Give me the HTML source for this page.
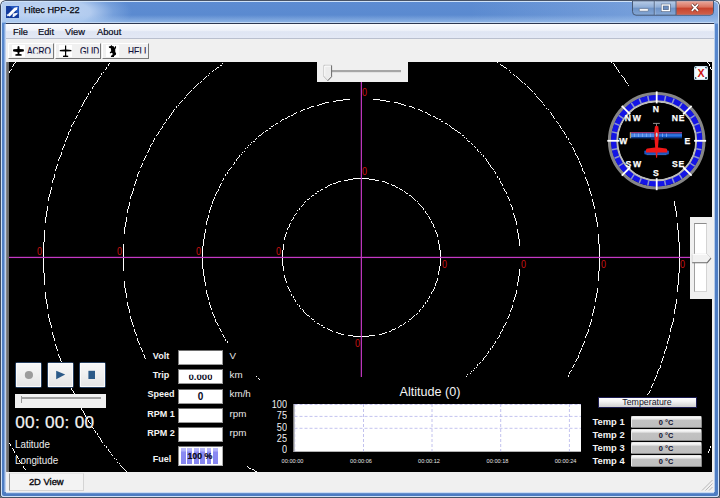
<!DOCTYPE html>
<html><head><meta charset="utf-8"><title>Hitec HPP-22</title>
<style>
html,body{margin:0;padding:0;}
body{width:720px;height:498px;overflow:hidden;background:linear-gradient(180deg,#f4f4f4 0,#f4f4f4 50%,#6a6a6a 50%,#6a6a6a 100%);font-family:"Liberation Sans",sans-serif;position:relative;}
.abs{position:absolute;}
#frame{position:absolute;left:0;top:0;width:720px;height:498px;box-sizing:border-box;border-radius:6px 6px 4px 4px;
 background:linear-gradient(90deg,rgba(255,255,255,0) 0,rgba(255,255,255,0) 470px,rgba(200,222,250,.36) 720px) 0 0/720px 24px no-repeat, linear-gradient(180deg,#5d8cd2 0,#5888ce 30px,#4f7ec4 140px,#4d7cc2 498px);
 box-shadow:inset 0 0 0 .8px #1c2436, inset 0 0 0 2px #cfe2f8;}
#topline{position:absolute;left:6.3px;top:22.9px;width:707.7px;height:1.1px;background:#2e3852;}
#toplite{position:absolute;left:6.3px;top:22.1px;width:707.7px;height:.8px;background:rgba(205,224,248,.8);}
#titleglow{position:absolute;left:2px;top:2px;width:190px;height:20px;background:radial-gradient(ellipse 92px 26px at 38px 10px,rgba(200,219,245,.95),rgba(190,212,243,.88) 55%,rgba(150,185,232,.45) 80%,rgba(120,160,220,0) 100%);}
#titlebot{position:absolute;left:2px;top:15px;width:716px;height:8px;background:linear-gradient(180deg,rgba(160,195,235,0),rgba(165,198,238,.75));}
#title{position:absolute;left:24px;top:5.2px;font-size:9.2px;color:#05050c;white-space:nowrap;-webkit-text-stroke:.25px #05050c;}
#client{position:absolute;left:6.3px;top:24px;width:707.7px;height:467.7px;background:#f0f0f0;box-shadow:-1.5px 0 0 0 rgba(196,214,242,.95), .7px 0 0 0 rgba(235,243,253,.95), 0 1.2px 0 0 rgba(215,230,250,.9);}
#menubar{position:absolute;left:0;top:0;width:707.7px;height:14px;background:linear-gradient(180deg,#fbfcfe 0,#eef1f9 45%,#dfe5f3 55%,#e3e8f5 100%);border-bottom:1px solid #b9bfce;}
.menu{position:absolute;top:2.6px;font-size:9.3px;color:#0a0a20;white-space:nowrap;-webkit-text-stroke:.2px #0a0a20;}
.tb{position:absolute;top:19px;height:16px;box-sizing:border-box;background:#f0f0f0;border-top:1px solid #fff;border-left:1px solid #fff;border-right:1.5px solid #7a7a7a;border-bottom:1.5px solid #7a7a7a;overflow:hidden;}
.tb .ico{position:absolute;left:3.5px;top:0.9px;width:13px;height:12px;background:#fff;}
.tb svg{display:block}
.tb span{position:absolute;top:1.6px;font-size:10.3px;color:#10103a;height:11px;line-height:11px;transform-origin:0 0;transform:scaleX(.805);clip-path:inset(0 0 3.1px 0);white-space:nowrap;-webkit-text-stroke:.2px #10103a;}
#canvas{position:absolute;left:9px;top:62px;width:703px;height:409.8px;background:#000;overflow:hidden;}
#edgeL{position:absolute;left:6.3px;top:62px;width:2.8px;height:409.8px;background:linear-gradient(90deg,#9a9a9a,#6e6e6e 40%,#6a6a6a);}
.w{color:#fff;}
.lab{position:absolute;color:#f4f4f4;font-weight:bold;font-size:9.6px;white-space:nowrap;text-align:center;transform:scaleX(.94);}
.unit{position:absolute;color:#e8e8e8;font-size:9.8px;white-space:nowrap;}
.box{position:absolute;left:178px;width:45px;height:15px;background:#fff;box-sizing:border-box;border:1px solid #9a9a9a;border-top-color:#6e6e6e;border-left-color:#808080;overflow:hidden;text-align:center;font-weight:bold;font-size:9.6px;color:#08081c;}
.tbtn{position:absolute;left:630.5px;width:71px;height:12px;box-sizing:border-box;border:1px solid #e8e8e8;border-right-color:#8a8a8a;border-bottom-color:#8a8a8a;border-radius:1.5px;background:linear-gradient(180deg,#fafafa 0,#e6e6e6 22%,#c2c2c2 30%,#bebebe 100%);text-align:center;font-weight:bold;font-size:7.4px;line-height:11.6px;color:#101030;}
.tlab{position:absolute;left:592.5px;color:#f4f4f4;font-weight:bold;font-size:9.4px;white-space:nowrap;}
.rl{position:absolute;color:#c81212;font-size:11px;line-height:10px;white-space:nowrap;transform-origin:0 0;transform:scaleX(.82);margin-left:-.6px;}
.pbtn{position:absolute;top:361.7px;width:27.8px;height:26.6px;box-sizing:border-box;border:1px solid #274060;border-radius:1.5px;background:linear-gradient(180deg,#f8f8f8 0,#efefef 50%,#e4e4e4 100%);box-shadow:inset 0 0 0 1px #fbfbfb;}
.ylab{position:absolute;color:#f0f0f0;font-size:10.8px;line-height:11px;width:24px;text-align:right;left:262.5px;transform-origin:100% 0;transform:scaleX(.85);white-space:nowrap;}
.xlab{position:absolute;color:#e4e4e4;font-size:5.6px;line-height:7px;top:457.6px;width:30px;text-align:center;white-space:nowrap;}
</style></head>
<body>
<div id="frame"></div>
<div id="titleglow"></div>
<div id="titlebot"></div>
<!-- app icon -->
<svg class="abs" style="left:6px;top:6px" width="13" height="12" viewBox="0 0 14 13">
 <rect x="0" y="0" width="14" height="13" fill="#123a9c"/>
 <path d="M4 0 H14 V9 Z" fill="#2458c0"/>
 <path d="M1 10 L9 2 L12.5 1 L12 3.5 L4 11.5 Z" fill="#fff"/>
 <path d="M7.5 8 L12.5 7.2 L12.5 8.8 L8.5 12 L7 12 Z" fill="#eef2fb"/>
 <path d="M0.5 9.5 L4 8.4 L2 11.5 Z" fill="#dfe8f8"/>
</svg>
<div id="title">Hitec HPP-22</div>
<!-- caption buttons -->
<svg class="abs" style="left:630px;top:0" width="86" height="18" viewBox="0 0 86 18">
 <defs>
  <linearGradient id="gb" x1="0" y1="0" x2="0" y2="1"><stop offset="0" stop-color="#b9cde8"/><stop offset=".45" stop-color="#8fadd6"/><stop offset=".5" stop-color="#6f93c6"/><stop offset="1" stop-color="#85a8d6"/></linearGradient>
  <linearGradient id="gr" x1="0" y1="0" x2="0" y2="1"><stop offset="0" stop-color="#e9a99c"/><stop offset=".45" stop-color="#d9705c"/><stop offset=".5" stop-color="#c6422c"/><stop offset="1" stop-color="#d0604a"/></linearGradient>
 </defs>
 <path d="M2.5 0.8 H83.5 V11.5 Q83.5 15.2 80 15.2 H6 Q2.5 15.2 2.5 11.5 Z" fill="url(#gb)" stroke="#3f4f6a" stroke-width="0.9"/>
 <path d="M46.3 1.2 H83 V11.5 Q83 14.7 80 14.7 H46.3 Z" fill="url(#gr)"/>
 <line x1="24.3" y1="1" x2="24.3" y2="15" stroke="#3f4f6a" stroke-width="0.8"/>
 <line x1="25.1" y1="1" x2="25.1" y2="15" stroke="#c9d9ef" stroke-width="0.6" opacity=".7"/>
 <line x1="46" y1="1" x2="46" y2="15" stroke="#3f4f6a" stroke-width="0.8"/>
 <rect x="9.3" y="8.6" width="9" height="2.6" rx=".6" fill="#fff" stroke="#4d5f7c" stroke-width=".6"/>
 <rect x="32.2" y="5" width="7.2" height="5.6" fill="#6d8fc0" stroke="#4d5f7c" stroke-width="2.5"/>
 <rect x="32.2" y="5" width="7.2" height="5.6" fill="none" stroke="#fff" stroke-width="1.4"/>
 <path d="M61.8 4.4 L68 10.8 M68 4.4 L61.8 10.8" stroke="#5a2a24" stroke-width="3" stroke-linecap="butt"/>
 <path d="M61.8 4.4 L68 10.8 M68 4.4 L61.8 10.8" stroke="#fff" stroke-width="1.8" stroke-linecap="butt"/>
</svg>

<div id="toplite"></div><div id="topline"></div>
<div id="client">
 <div id="menubar"></div>
 <div class="menu" style="left:6.7px">File</div>
 <div class="menu" style="left:31.7px">Edit</div>
 <div class="menu" style="left:58.7px">View</div>
 <div class="menu" style="left:90.7px">About</div>

 <div class="tb" style="left:1.7px;width:46px"><div class="ico"><svg width="13" height="12" viewBox="0 0 13 12"><path d="M5.6 1.6 Q6.5 0.6 7.4 1.6 L7.6 4 L11.6 4.2 Q12.4 5.3 11.6 6.6 L7.6 7 L7.3 9 L9.6 9.3 V10.8 H3.4 V9.3 L5.7 9 L5.4 7 L1.4 6.6 Q0.6 5.3 1.4 4.2 L5.4 4 Z" fill="#000"/></svg></div><span style="left:18.2px">ACRO</span></div>
 <div class="tb" style="left:48.7px;width:46.5px"><div class="ico"><svg width="13" height="12" viewBox="0 0 13 12"><path d="M6 0.5 H7.2 V4.6 L12.4 4.9 V6.2 L7.2 6.5 V10.4 L9.2 10.7 V12 H4 V10.7 L6 10.4 V6.5 L0.8 6.2 V4.9 L6 4.6 Z" fill="#000"/></svg></div><span style="left:24px">GLID</span></div>
 <div class="tb" style="left:95.7px;width:47px"><div class="ico"><svg width="13" height="12" viewBox="0 0 13 12"><path d="M5.5 0 L6.2 1.1 L8 1.5 L8.7 3 L9.2 1.3 Q9.7 0.6 10.1 1.5 L10 3 L9.2 4.2 L9.3 7.2 L10.1 8 L9.9 9.8 L8.7 10.6 L8 11 L8 12 L4.9 12 L5 10.8 L6.4 10 L6.6 8.2 L5.1 7.7 L4.4 8.5 L3.7 8 L4.1 6.9 L5.2 6.3 L4.8 3.3 L3 2.8 L2.8 1.4 L4.6 1.1 Z" fill="#000"/></svg></div><span style="left:24.8px">HELI</span></div>
</div>

<div id="edgeL"></div>
<div id="canvas">
<svg class="abs" style="left:0;top:0" width="703" height="410" viewBox="9 62 703 410">
 <g id="rings" fill="none" stroke-width="1"><path stroke="#fff" d="M15 62.5h1M497 62.5h1M611 62.5h1M707 62.5h1M14 63.5h1M109 63.5h1M222 63.5h1M613 63.5h1M708 63.5h1M13 64.5h1M108 64.5h1M500 64.5h1M614 64.5h1M709 64.5h1M13 65.5h1M108 65.5h1M220 65.5h2M501 65.5h2M614 65.5h1M709 65.5h1M12 66.5h1M503 66.5h1M615 66.5h1M106 67.5h1M217 67.5h2M504 67.5h2M616 67.5h1M710 67.5h1M106 68.5h1M216 68.5h1M506 68.5h1M616 68.5h1M710 68.5h1M11 69.5h1M105 69.5h1M215 69.5h1M617 69.5h1M711 69.5h1M10 70.5h1M213 70.5h1M509 70.5h1M618 70.5h1M9 71.5h1M212 71.5h1M618 71.5h1M9 72.5h1M103 72.5h1M510 72.5h1M619 72.5h1M101 73.5h1M209 73.5h1M101 74.5h1M513 74.5h1M208 75.5h1M514 75.5h1M621 75.5h1M100 76.5h1M206 76.5h1M516 76.5h1M622 76.5h1M99 77.5h1M205 77.5h1M517 77.5h1M623 77.5h1M98 78.5h1M204 78.5h1M518 78.5h1M624 78.5h1M98 79.5h1M203 79.5h1M519 79.5h1M624 79.5h1M97 80.5h1M520 80.5h1M625 80.5h1M97 81.5h1M201 81.5h1M521 81.5h1M625 81.5h1M96 82.5h1M200 82.5h1M522 82.5h1M626 82.5h1M95 83.5h1M198 83.5h1M524 83.5h1M627 83.5h1M94 84.5h1M197 84.5h1M525 84.5h1M196 85.5h1M628 85.5h1M93 86.5h1M195 86.5h1M527 86.5h1M92 87.5h1M194 87.5h1M528 87.5h1M92 88.5h1M193 88.5h1M529 88.5h1M530 89.5h1M191 90.5h1M531 90.5h1M90 91.5h1M190 91.5h1M532 91.5h1M90 92.5h1M189 92.5h1M88 93.5h1M188 93.5h1M534 93.5h1M88 94.5h1M187 94.5h1M535 94.5h1M186 95.5h1M87 96.5h1M536 96.5h1M86 97.5h1M185 97.5h1M537 97.5h1M86 98.5h1M184 98.5h1M538 98.5h1M85 99.5h1M343 99.5h7M373 99.5h7M539 99.5h1M84 100.5h1M182 100.5h1M336 100.5h7M380 100.5h6M540 100.5h1M84 101.5h1M181 101.5h1M333 101.5h3M386 101.5h4M541 101.5h1M83 102.5h1M180 102.5h1M325 102.5h4M394 102.5h4M542 102.5h1M83 103.5h1M179 103.5h1M322 103.5h3M398 103.5h3M82 104.5h1M319 104.5h3M401 104.5h3M543 104.5h1M82 105.5h1M178 105.5h1M317 105.5h2M404 105.5h2M544 105.5h1M81 106.5h1M176 106.5h1M311 106.5h3M409 106.5h3M176 107.5h1M309 107.5h2M412 107.5h2M307 108.5h2M414 108.5h1M546 108.5h1M80 109.5h1M174 109.5h1M303 109.5h2M418 109.5h2M548 109.5h1M79 110.5h1M173 110.5h1M301 110.5h2M420 110.5h2M79 111.5h1M173 111.5h1M300 111.5h1M422 111.5h1M78 112.5h1M172 112.5h1M296 112.5h1M425 112.5h2M550 112.5h1M171 113.5h1M294 113.5h2M427 113.5h1M551 113.5h1M171 114.5h1M293 114.5h1M428 114.5h2M551 114.5h1M77 115.5h1M170 115.5h1M291 115.5h2M430 115.5h1M552 115.5h1M76 116.5h1M169 116.5h1M288 116.5h2M433 116.5h2M553 116.5h1M76 117.5h1M169 117.5h1M287 117.5h1M435 117.5h1M553 117.5h1M75 118.5h1M168 118.5h1M285 118.5h2M436 118.5h2M554 118.5h1M166 119.5h1M282 119.5h2M439 119.5h2M166 120.5h1M281 120.5h1M74 121.5h1M280 121.5h1M441 121.5h2M556 121.5h1M73 122.5h1M165 122.5h1M557 122.5h1M73 123.5h1M164 123.5h1M276 123.5h2M445 123.5h2M558 123.5h1M72 124.5h1M163 124.5h1M275 124.5h1M447 124.5h1M71 125.5h1M273 125.5h1M449 125.5h1M559 125.5h1M71 126.5h1M162 126.5h1M271 126.5h2M450 126.5h1M560 126.5h1M162 127.5h1M451 127.5h1M560 127.5h1M161 128.5h1M269 128.5h2M452 128.5h2M561 128.5h1M70 129.5h1M160 129.5h1M454 129.5h1M70 130.5h1M266 130.5h2M455 130.5h2M562 130.5h1M69 131.5h1M159 131.5h1M265 131.5h1M457 131.5h1M563 131.5h1M68 132.5h1M158 132.5h1M263 132.5h1M458 132.5h2M564 132.5h1M68 133.5h1M158 133.5h1M262 133.5h1M460 133.5h1M564 133.5h1M68 134.5h1M157 134.5h1M261 134.5h1M565 134.5h1M156 135.5h1M259 135.5h2M462 135.5h2M67 136.5h1M258 136.5h1M566 136.5h1M67 137.5h1M464 137.5h1M566 137.5h1M66 138.5h1M154 138.5h1M256 138.5h1M466 138.5h1M568 138.5h1M66 139.5h1M154 139.5h1M255 139.5h1M568 139.5h1M65 140.5h1M153 140.5h1M467 140.5h1M65 141.5h1M153 141.5h1M253 141.5h2M468 141.5h2M251 142.5h1M569 142.5h1M152 143.5h1M471 143.5h1M570 143.5h1M64 144.5h1M151 144.5h1M250 144.5h1M472 144.5h1M571 144.5h1M64 145.5h1M150 145.5h1M248 145.5h1M63 146.5h1M150 146.5h1M474 146.5h1M63 147.5h1M247 147.5h1M475 147.5h1M572 147.5h1M62 148.5h1M149 148.5h1M245 148.5h1M573 148.5h1M62 149.5h1M149 149.5h1M477 149.5h1M573 149.5h1M148 150.5h1M477 150.5h1M574 150.5h1M148 151.5h1M244 151.5h1M478 151.5h1M574 151.5h1M61 152.5h1M147 152.5h1M242 152.5h1M480 152.5h1M61 153.5h1M575 153.5h1M61 154.5h1M241 154.5h1M481 154.5h1M575 154.5h1M60 155.5h1M146 155.5h1M239 155.5h1M483 155.5h1M576 155.5h1M60 156.5h1M145 156.5h1M239 156.5h1M483 156.5h1M577 156.5h1M59 157.5h1M145 157.5h1M238 157.5h1M577 157.5h1M59 158.5h1M144 158.5h1M237 158.5h1M485 158.5h1M578 158.5h1M58 159.5h1M144 159.5h1M236 159.5h1M486 159.5h1M578 159.5h1M58 160.5h1M143 160.5h1M236 160.5h1M486 160.5h1M487 161.5h1M579 161.5h1M234 162.5h1M488 162.5h1M579 162.5h1M142 163.5h1M234 163.5h1M488 163.5h1M580 163.5h1M57 164.5h1M142 164.5h1M233 164.5h1M489 164.5h1M580 164.5h1M57 165.5h1M141 165.5h1M490 165.5h1M581 165.5h1M56 166.5h1M141 166.5h1M490 166.5h1M581 166.5h1M56 167.5h1M140 167.5h1M231 167.5h1M491 167.5h1M56 168.5h1M230 168.5h1M492 168.5h1M582 168.5h1M55 169.5h1M229 169.5h1M493 169.5h1M582 169.5h1M55 170.5h1M228 170.5h1M582 170.5h1M139 171.5h1M494 171.5h1M583 171.5h1M138 172.5h1M227 172.5h1M495 172.5h1M584 172.5h1M138 173.5h1M227 173.5h1M495 173.5h1M584 173.5h1M54 174.5h1M137 174.5h1M225 174.5h1M54 175.5h1M137 175.5h1M225 175.5h1M54 176.5h1M137 176.5h1M497 176.5h1M54 177.5h1M497 177.5h1M585 177.5h1M53 178.5h1M223 178.5h1M353 178.5h16M499 178.5h1M585 178.5h1M53 179.5h1M136 179.5h1M223 179.5h1M348 179.5h5M369 179.5h6M499 179.5h1M586 179.5h1M52 180.5h1M136 180.5h1M222 180.5h1M344 180.5h4M375 180.5h4M586 180.5h1M52 181.5h1M135 181.5h1M338 181.5h3M382 181.5h3M500 181.5h1M587 181.5h1M52 182.5h1M135 182.5h1M336 182.5h2M385 182.5h2M500 182.5h1M587 182.5h1M135 183.5h1M221 183.5h1M333 183.5h3M387 183.5h2M501 183.5h1M587 183.5h1M134 184.5h1M220 184.5h1M330 184.5h2M391 184.5h1M502 184.5h1M588 184.5h1M134 185.5h1M220 185.5h1M328 185.5h2M392 185.5h3M502 185.5h1M588 185.5h1M219 186.5h1M327 186.5h1M395 186.5h1M51 187.5h1M219 187.5h1M325 187.5h2M396 187.5h2M51 188.5h1M133 188.5h1M399 188.5h1M503 188.5h1M589 188.5h1M51 189.5h1M133 189.5h1M218 189.5h1M321 189.5h2M400 189.5h2M504 189.5h1M589 189.5h1M50 190.5h1M133 190.5h1M218 190.5h1M320 190.5h1M402 190.5h1M504 190.5h1M589 190.5h1M50 191.5h1M132 191.5h1M217 191.5h1M317 191.5h2M404 191.5h1M505 191.5h1M590 191.5h1M50 192.5h1M132 192.5h1M216 192.5h1M405 192.5h1M506 192.5h1M590 192.5h1M50 193.5h1M132 193.5h1M216 193.5h1M315 193.5h2M406 193.5h2M506 193.5h1M590 193.5h1M49 194.5h1M131 194.5h1M215 194.5h1M591 194.5h1M49 195.5h1M131 195.5h1M215 195.5h1M312 195.5h2M409 195.5h2M591 195.5h1M49 196.5h1M130 196.5h1M311 196.5h1M411 196.5h1M507 196.5h1M48 197.5h1M130 197.5h1M214 197.5h1M412 197.5h1M508 197.5h1M48 198.5h1M130 198.5h1M214 198.5h1M309 198.5h1M413 198.5h1M508 198.5h1M48 199.5h1M213 199.5h1M307 199.5h2M414 199.5h1M509 199.5h1M592 199.5h1M48 200.5h1M213 200.5h1M415 200.5h1M509 200.5h1M592 200.5h1M212 201.5h1M305 201.5h1M417 201.5h1M592 201.5h1M674 201.5h1M129 202.5h1M212 202.5h1M304 202.5h1M593 202.5h1M674 202.5h1M129 203.5h1M212 203.5h1M418 203.5h1M593 203.5h1M674 203.5h1M129 204.5h1M303 204.5h1M419 204.5h1M510 204.5h1M593 204.5h1M674 204.5h1M129 205.5h1M211 205.5h1M302 205.5h1M420 205.5h1M511 205.5h1M593 205.5h1M674 205.5h1M47 206.5h1M128 206.5h1M211 206.5h1M301 206.5h1M421 206.5h1M511 206.5h1M594 206.5h1M675 206.5h1M47 207.5h1M128 207.5h1M210 207.5h1M422 207.5h1M512 207.5h1M594 207.5h1M675 207.5h1M47 208.5h1M128 208.5h1M210 208.5h1M299 208.5h1M423 208.5h1M512 208.5h1M594 208.5h1M675 208.5h1M47 209.5h1M127 209.5h1M210 209.5h1M299 209.5h1M423 209.5h1M512 209.5h1M675 209.5h1M47 210.5h1M127 210.5h1M209 210.5h1M297 210.5h1M675 210.5h1M46 211.5h1M127 211.5h1M209 211.5h1M425 211.5h1M676 211.5h1M46 212.5h1M127 212.5h1M209 212.5h1M425 212.5h1M676 212.5h1M46 213.5h1M296 213.5h1M426 213.5h1M513 213.5h1M595 213.5h1M676 213.5h1M46 214.5h1M295 214.5h1M427 214.5h1M513 214.5h1M595 214.5h1M676 214.5h1M46 215.5h1M208 215.5h1M294 215.5h1M514 215.5h1M595 215.5h1M676 215.5h1M46 216.5h1M208 216.5h1M428 216.5h1M514 216.5h1M595 216.5h1M676 216.5h1M45 217.5h1M126 217.5h1M208 217.5h1M293 217.5h1M429 217.5h1M514 217.5h1M596 217.5h1M45 218.5h1M126 218.5h1M207 218.5h1M293 218.5h1M429 218.5h1M515 218.5h1M596 218.5h1M45 219.5h1M126 219.5h1M207 219.5h1M292 219.5h1M430 219.5h1M515 219.5h1M596 219.5h1M45 220.5h1M126 220.5h1M207 220.5h1M291 220.5h1M515 220.5h1M596 220.5h1M45 221.5h1M126 221.5h1M206 221.5h1M431 221.5h1M516 221.5h1M596 221.5h1M45 222.5h1M125 222.5h1M206 222.5h1M431 222.5h1M516 222.5h1M597 222.5h1M125 223.5h1M206 223.5h1M290 223.5h1M432 223.5h1M516 223.5h1M597 223.5h1M677 223.5h1M125 224.5h1M206 224.5h1M289 224.5h1M433 224.5h1M516 224.5h1M597 224.5h1M677 224.5h1M125 225.5h1M289 225.5h1M433 225.5h1M597 225.5h1M677 225.5h1M125 226.5h1M289 226.5h1M433 226.5h1M597 226.5h1M677 226.5h1M124 227.5h1M288 227.5h1M434 227.5h1M677 227.5h1M124 228.5h1M287 228.5h1M677 228.5h1M124 229.5h1M205 229.5h1M287 229.5h1M517 229.5h1M677 229.5h1M44 230.5h1M124 230.5h1M205 230.5h1M435 230.5h1M517 230.5h1M678 230.5h1M44 231.5h1M124 231.5h1M205 231.5h1M435 231.5h1M517 231.5h1M678 231.5h1M44 232.5h1M124 232.5h1M205 232.5h1M286 232.5h1M436 232.5h1M517 232.5h1M678 232.5h1M44 233.5h1M124 233.5h1M204 233.5h1M286 233.5h1M436 233.5h1M518 233.5h1M678 233.5h1M44 234.5h1M204 234.5h1M285 234.5h1M437 234.5h1M518 234.5h1M598 234.5h1M678 234.5h1M44 235.5h1M204 235.5h1M285 235.5h1M437 235.5h1M518 235.5h1M598 235.5h1M678 235.5h1M44 236.5h1M204 236.5h1M285 236.5h1M437 236.5h1M518 236.5h1M598 236.5h1M678 236.5h1M44 237.5h1M204 237.5h1M284 237.5h1M518 237.5h1M598 237.5h1M678 237.5h1M44 238.5h1M204 238.5h1M284 238.5h1M518 238.5h1M598 238.5h1M678 238.5h1M44 239.5h1M203 239.5h1M284 239.5h1M519 239.5h1M598 239.5h1M678 239.5h1M44 240.5h1M203 240.5h1M438 240.5h1M519 240.5h1M598 240.5h1M678 240.5h1M44 241.5h1M203 241.5h1M438 241.5h1M519 241.5h1M598 241.5h1M678 241.5h1M43 242.5h1M203 242.5h1M438 242.5h1M519 242.5h1M598 242.5h1M679 242.5h1M43 243.5h1M203 243.5h1M438 243.5h1M519 243.5h1M598 243.5h1M679 243.5h1M43 244.5h1M123 244.5h1M203 244.5h1M283 244.5h1M439 244.5h1M519 244.5h1M599 244.5h1M679 244.5h1M43 245.5h1M123 245.5h1M203 245.5h1M283 245.5h1M439 245.5h1M519 245.5h1M599 245.5h1M679 245.5h1M43 246.5h1M123 246.5h1M202 246.5h1M283 246.5h1M439 246.5h1M599 246.5h1M679 246.5h1M43 247.5h1M123 247.5h1M202 247.5h1M283 247.5h1M439 247.5h1M599 247.5h1M679 247.5h1M43 248.5h1M123 248.5h1M202 248.5h1M283 248.5h1M439 248.5h1M599 248.5h1M679 248.5h1M43 249.5h1M123 249.5h1M202 249.5h1M283 249.5h1M439 249.5h1M599 249.5h1M679 249.5h1M43 250.5h1M123 250.5h1M202 250.5h1M282 250.5h1M440 250.5h1M599 250.5h1M679 250.5h1M43 251.5h1M123 251.5h1M202 251.5h1M282 251.5h1M440 251.5h1M599 251.5h1M679 251.5h1M43 252.5h1M123 252.5h1M202 252.5h1M282 252.5h1M440 252.5h1M599 252.5h1M679 252.5h1M43 253.5h1M123 253.5h1M202 253.5h1M282 253.5h1M440 253.5h1M599 253.5h1M679 253.5h1M43 254.5h1M123 254.5h1M202 254.5h1M282 254.5h1M440 254.5h1M599 254.5h1M679 254.5h1M43 255.5h1M123 255.5h1M202 255.5h1M282 255.5h1M440 255.5h1M599 255.5h1M679 255.5h1M43 256.5h1M123 256.5h1M202 256.5h1M282 256.5h1M440 256.5h1M599 256.5h1M679 256.5h1M43 257.5h1M123 257.5h1M202 257.5h1M282 257.5h1M440 257.5h1M599 257.5h1M679 257.5h1M43 258.5h1M123 258.5h1M202 258.5h1M282 258.5h1M440 258.5h1M599 258.5h1M679 258.5h1M43 259.5h1M123 259.5h1M202 259.5h1M282 259.5h1M440 259.5h1M599 259.5h1M679 259.5h1M43 260.5h1M123 260.5h1M202 260.5h1M282 260.5h1M440 260.5h1M599 260.5h1M679 260.5h1M43 261.5h1M123 261.5h1M202 261.5h1M282 261.5h1M440 261.5h1M599 261.5h1M679 261.5h1M43 262.5h1M123 262.5h1M202 262.5h1M282 262.5h1M440 262.5h1M599 262.5h1M679 262.5h1M43 263.5h1M123 263.5h1M202 263.5h1M282 263.5h1M440 263.5h1M599 263.5h1M679 263.5h1M43 264.5h1M123 264.5h1M202 264.5h1M282 264.5h1M440 264.5h1M599 264.5h1M679 264.5h1M43 265.5h1M123 265.5h1M202 265.5h1M282 265.5h1M440 265.5h1M599 265.5h1M679 265.5h1M43 266.5h1M123 266.5h1M202 266.5h1M283 266.5h1M439 266.5h1M599 266.5h1M679 266.5h1M43 267.5h1M123 267.5h1M202 267.5h1M283 267.5h1M439 267.5h1M599 267.5h1M679 267.5h1M43 268.5h1M123 268.5h1M202 268.5h1M283 268.5h1M439 268.5h1M599 268.5h1M679 268.5h1M43 269.5h1M123 269.5h1M203 269.5h1M283 269.5h1M439 269.5h1M519 269.5h1M599 269.5h1M679 269.5h1M43 270.5h1M123 270.5h1M203 270.5h1M283 270.5h1M439 270.5h1M519 270.5h1M599 270.5h1M679 270.5h1M43 271.5h1M203 271.5h1M438 271.5h1M519 271.5h1M598 271.5h1M679 271.5h1M43 272.5h1M203 272.5h1M438 272.5h1M519 272.5h1M598 272.5h1M679 272.5h1M44 273.5h1M203 273.5h1M438 273.5h1M519 273.5h1M598 273.5h1M678 273.5h1M44 274.5h1M203 274.5h1M438 274.5h1M519 274.5h1M598 274.5h1M678 274.5h1M44 275.5h1M203 275.5h1M284 275.5h1M519 275.5h1M598 275.5h1M678 275.5h1M44 276.5h1M204 276.5h1M284 276.5h1M518 276.5h1M598 276.5h1M678 276.5h1M44 277.5h1M204 277.5h1M284 277.5h1M518 277.5h1M598 277.5h1M678 277.5h1M44 278.5h1M204 278.5h1M285 278.5h1M437 278.5h1M518 278.5h1M598 278.5h1M678 278.5h1M44 279.5h1M204 279.5h1M285 279.5h1M437 279.5h1M518 279.5h1M598 279.5h1M678 279.5h1M44 280.5h1M204 280.5h1M285 280.5h1M437 280.5h1M518 280.5h1M598 280.5h1M678 280.5h1M44 281.5h1M124 281.5h1M204 281.5h1M286 281.5h1M436 281.5h1M518 281.5h1M678 281.5h1M44 282.5h1M124 282.5h1M205 282.5h1M286 282.5h1M436 282.5h1M517 282.5h1M678 282.5h1M44 283.5h1M124 283.5h1M205 283.5h1M435 283.5h1M517 283.5h1M678 283.5h1M44 284.5h1M124 284.5h1M205 284.5h1M435 284.5h1M517 284.5h1M678 284.5h1M124 285.5h1M205 285.5h1M435 285.5h1M517 285.5h1M677 285.5h1M124 286.5h1M287 286.5h1M677 286.5h1M124 287.5h1M288 287.5h1M434 287.5h1M677 287.5h1M125 288.5h1M288 288.5h1M434 288.5h1M597 288.5h1M677 288.5h1M125 289.5h1M289 289.5h1M433 289.5h1M597 289.5h1M677 289.5h1M125 290.5h1M206 290.5h1M289 290.5h1M433 290.5h1M516 290.5h1M597 290.5h1M677 290.5h1M125 291.5h1M206 291.5h1M290 291.5h1M432 291.5h1M516 291.5h1M597 291.5h1M677 291.5h1M45 292.5h1M125 292.5h1M206 292.5h1M431 292.5h1M516 292.5h1M597 292.5h1M45 293.5h1M126 293.5h1M206 293.5h1M431 293.5h1M516 293.5h1M596 293.5h1M45 294.5h1M126 294.5h1M207 294.5h1M291 294.5h1M515 294.5h1M596 294.5h1M45 295.5h1M126 295.5h1M207 295.5h1M291 295.5h1M515 295.5h1M596 295.5h1M45 296.5h1M126 296.5h1M207 296.5h1M293 296.5h1M429 296.5h1M515 296.5h1M596 296.5h1M45 297.5h1M126 297.5h1M208 297.5h1M293 297.5h1M429 297.5h1M514 297.5h1M596 297.5h1M45 298.5h1M208 298.5h1M428 298.5h1M514 298.5h1M595 298.5h1M46 299.5h1M208 299.5h1M294 299.5h1M514 299.5h1M595 299.5h1M676 299.5h1M46 300.5h1M295 300.5h1M427 300.5h1M513 300.5h1M595 300.5h1M676 300.5h1M46 301.5h1M295 301.5h1M427 301.5h1M513 301.5h1M595 301.5h1M676 301.5h1M46 302.5h1M127 302.5h1M209 302.5h1M425 302.5h1M676 302.5h1M46 303.5h1M127 303.5h1M209 303.5h1M425 303.5h1M676 303.5h1M47 304.5h1M127 304.5h1M209 304.5h1M297 304.5h1M675 304.5h1M47 305.5h1M127 305.5h1M210 305.5h1M299 305.5h1M423 305.5h1M512 305.5h1M675 305.5h1M47 306.5h1M128 306.5h1M210 306.5h1M299 306.5h1M423 306.5h1M512 306.5h1M594 306.5h1M675 306.5h1M47 307.5h1M128 307.5h1M210 307.5h1M422 307.5h1M512 307.5h1M594 307.5h1M675 307.5h1M47 308.5h1M128 308.5h1M211 308.5h1M300 308.5h1M511 308.5h1M594 308.5h1M675 308.5h1M129 309.5h1M211 309.5h1M302 309.5h1M420 309.5h1M511 309.5h1M593 309.5h1M674 309.5h1M129 310.5h1M303 310.5h1M419 310.5h1M510 310.5h1M593 310.5h1M674 310.5h1M129 311.5h1M303 311.5h1M419 311.5h1M510 311.5h1M593 311.5h1M674 311.5h1M129 312.5h1M212 312.5h1M304 312.5h1M593 312.5h1M674 312.5h1M212 313.5h1M305 313.5h1M417 313.5h1M592 313.5h1M674 313.5h1M48 314.5h1M213 314.5h1M306 314.5h1M416 314.5h1M509 314.5h1M592 314.5h1M48 315.5h1M213 315.5h1M307 315.5h2M414 315.5h1M509 315.5h1M592 315.5h1M48 316.5h1M130 316.5h1M214 316.5h1M309 316.5h1M413 316.5h1M508 316.5h1M48 317.5h1M130 317.5h1M214 317.5h1M412 317.5h1M508 317.5h1M49 318.5h1M130 318.5h1M311 318.5h1M411 318.5h1M507 318.5h1M673 318.5h1M49 319.5h1M131 319.5h1M215 319.5h1M312 319.5h2M409 319.5h2M591 319.5h1M673 319.5h1M49 320.5h1M131 320.5h1M215 320.5h1M591 320.5h1M673 320.5h1M49 321.5h1M131 321.5h1M215 321.5h1M314 321.5h1M408 321.5h1M591 321.5h1M673 321.5h1M50 322.5h1M132 322.5h1M216 322.5h1M405 322.5h1M506 322.5h1M590 322.5h1M672 322.5h1M50 323.5h1M132 323.5h1M217 323.5h1M317 323.5h2M404 323.5h1M505 323.5h1M590 323.5h1M672 323.5h1M50 324.5h1M132 324.5h1M217 324.5h1M319 324.5h1M403 324.5h1M505 324.5h1M590 324.5h1M672 324.5h1M51 325.5h1M133 325.5h1M218 325.5h1M321 325.5h2M400 325.5h2M504 325.5h1M589 325.5h1M671 325.5h1M51 326.5h1M133 326.5h1M399 326.5h1M503 326.5h1M589 326.5h1M671 326.5h1M51 327.5h1M323 327.5h2M398 327.5h1M503 327.5h1M671 327.5h1M219 328.5h1M327 328.5h1M395 328.5h1M670 328.5h1M134 329.5h1M220 329.5h1M328 329.5h2M392 329.5h3M502 329.5h1M588 329.5h1M670 329.5h1M134 330.5h1M220 330.5h1M330 330.5h2M391 330.5h1M502 330.5h1M588 330.5h1M670 330.5h1M134 331.5h1M221 331.5h1M332 331.5h1M389 331.5h2M501 331.5h1M588 331.5h1M670 331.5h1M52 332.5h1M135 332.5h1M336 332.5h2M385 332.5h2M500 332.5h1M587 332.5h1M52 333.5h1M135 333.5h1M338 333.5h3M382 333.5h3M500 333.5h1M587 333.5h1M52 334.5h1M136 334.5h1M222 334.5h1M341 334.5h3M379 334.5h3M586 334.5h1M53 335.5h1M136 335.5h1M223 335.5h1M348 335.5h5M369 335.5h6M499 335.5h1M586 335.5h1M669 335.5h1M53 336.5h1M223 336.5h1M353 336.5h16M499 336.5h1M585 336.5h1M669 336.5h1M53 337.5h1M224 337.5h1M498 337.5h1M585 337.5h1M669 337.5h1M54 338.5h1M137 338.5h1M497 338.5h1M668 338.5h1M54 339.5h1M137 339.5h1M225 339.5h1M668 339.5h1M54 340.5h1M137 340.5h1M225 340.5h1M668 340.5h1M138 341.5h1M227 341.5h1M495 341.5h1M584 341.5h1M667 341.5h1M138 342.5h1M227 342.5h1M495 342.5h1M584 342.5h1M667 342.5h1M139 343.5h1M494 343.5h1M583 343.5h1M667 343.5h1M55 344.5h1M139 344.5h1M583 344.5h1M55 345.5h1M493 345.5h1M582 345.5h1M56 346.5h1M492 346.5h1M582 346.5h1M666 346.5h1M56 347.5h1M140 347.5h1M492 347.5h1M666 347.5h1M56 348.5h1M141 348.5h1M490 348.5h1M581 348.5h1M666 348.5h1M57 349.5h1M141 349.5h1M490 349.5h1M581 349.5h1M665 349.5h1M57 350.5h1M142 350.5h1M580 350.5h1M665 350.5h1M142 351.5h1M488 351.5h1M580 351.5h1M664 351.5h1M488 352.5h1M579 352.5h1M664 352.5h1M487 353.5h1M579 353.5h1M664 353.5h1M58 354.5h1M143 354.5h1M58 355.5h1M144 355.5h1M486 355.5h1M578 355.5h1M59 356.5h1M144 356.5h1M485 356.5h1M578 356.5h1M663 356.5h1M59 357.5h1M144 357.5h1M484 357.5h1M578 357.5h1M663 357.5h1M60 358.5h1M145 358.5h1M483 358.5h1M577 358.5h1M662 358.5h1M60 359.5h1M483 359.5h1M576 359.5h1M662 359.5h1M60 360.5h1M482 360.5h1M576 360.5h1M662 360.5h1M61 361.5h1M575 361.5h1M661 361.5h1M61 362.5h1M480 362.5h1M661 362.5h1M479 363.5h1M477 364.5h1M574 364.5h1M62 365.5h1M477 365.5h1M573 365.5h1M660 365.5h1M62 366.5h1M573 366.5h1M660 366.5h1M62 367.5h1M476 367.5h1M572 367.5h1M660 367.5h1M63 368.5h1M474 368.5h1M659 368.5h1M64 369.5h1M658 369.5h1M64 370.5h1M473 370.5h1M571 370.5h1M658 370.5h1M471 371.5h1M570 371.5h1M657 371.5h1M569 372.5h1M657 372.5h1M470 373.5h1M569 373.5h1M657 373.5h1M65 374.5h1M467 374.5h1M66 375.5h1M568 375.5h1M656 375.5h1M66 376.5h1M256 376.5h1M466 376.5h1M568 376.5h1M656 376.5h1M67 377.5h1M655 377.5h1M67 378.5h1M258 378.5h1M655 378.5h1M259 379.5h1M654 379.5h1M654 380.5h1M68 381.5h1M68 382.5h1M69 383.5h1M653 383.5h1M70 384.5h1M652 384.5h1M70 385.5h1M652 385.5h1M651 386.5h1M651 387.5h1M71 388.5h1M71 389.5h1M72 390.5h1M650 390.5h1M73 391.5h1M649 391.5h1M73 392.5h1M649 392.5h1M74 393.5h1M648 393.5h1M647 394.5h1M75 396.5h1M76 397.5h1M76 398.5h1M77 399.5h1M78 402.5h1M78 403.5h1M79 404.5h1M80 405.5h1M80 406.5h1M81 408.5h1M81 409.5h1M82 410.5h1M83 411.5h1M83 412.5h1M84 413.5h1M84 414.5h1M85 415.5h1M85 416.5h1M86 417.5h1M87 418.5h1M88 420.5h1M88 421.5h1M89 422.5h1M90 423.5h1M91 426.5h1M92 427.5h1M93 428.5h1M94 430.5h1M95 431.5h1M95 432.5h1M97 433.5h1M97 434.5h1M98 436.5h1M99 437.5h1M100 438.5h1M100 439.5h1M101 440.5h1M101 441.5h1M102 442.5h1M9 443.5h1M10 444.5h1M10 445.5h1M104 445.5h1M106 446.5h1M710 446.5h1M106 447.5h1M710 447.5h1M12 448.5h1M13 449.5h1M108 449.5h1M709 449.5h1M13 450.5h1M108 450.5h1M709 450.5h1M14 451.5h1M109 451.5h1M708 451.5h1M14 452.5h1M110 452.5h1M708 452.5h1M111 454.5h1M16 455.5h1M112 455.5h1M17 456.5h1M17 457.5h1M18 458.5h1M114 458.5h1M116 459.5h1M19 460.5h1M19 461.5h1M20 462.5h1M117 462.5h1M21 463.5h1M119 463.5h1M120 465.5h1M23 466.5h1M121 466.5h1M247 466.5h1M23 467.5h1M122 467.5h1M248 467.5h1M24 468.5h1M123 468.5h1M249 468.5h2M25 469.5h1M124 469.5h1M252 469.5h2M125 470.5h1M254 470.5h1M126 471.5h1M255 471.5h2"/></g>
 <rect x="8.5" y="256.8" width="682" height="1.25" fill="#c438c4"/>
 <rect x="360.75" y="82" width="1.2" height="295" fill="#c438c4"/>
</svg>
</div>

<div id="ov" class="abs" style="left:0;top:0;width:720px;height:498px;overflow:hidden">
<!-- black panels hiding rings -->
<div class="abs" style="left:146px;top:343px;width:109.5px;height:123px;background:#000"></div>
<div class="abs" style="left:260px;top:377px;width:328px;height:95px;background:#000"></div>
<div class="abs" style="left:588px;top:395px;width:119.5px;height:77px;background:#000"></div>
<div class="abs" style="left:600px;top:85.5px;width:112px;height:115.5px;background:#000"></div>
<!-- red ring labels -->
<div class="rl" style="left:362.3px;top:166px">0</div>
<div class="rl" style="left:362.3px;top:86.5px">0</div>
<div class="rl" style="left:356px;top:338px">0</div>
<div class="rl" style="left:277px;top:246px">0</div>
<div class="rl" style="left:197px;top:246px">0</div>
<div class="rl" style="left:117.5px;top:246px">0</div>
<div class="rl" style="left:38px;top:246px">0</div>
<div class="rl" style="left:442.3px;top:258.5px">0</div>
<div class="rl" style="left:521.8px;top:258.5px">0</div>
<div class="rl" style="left:601.3px;top:258.5px">0</div>
<div class="rl" style="left:680.8px;top:258.5px">0</div>

<!-- top slider -->
<div class="abs" style="left:317px;top:61.5px;width:90.5px;height:20.2px;background:#f0f0f0"></div>
<div class="abs" style="left:331px;top:70.4px;width:69.5px;height:1.9px;background:#a6a6a6;border-bottom:.6px solid #e2e2e2"></div>
<svg class="abs" style="left:322px;top:64px" width="12" height="19" viewBox="0 0 12 19"><path d="M1.9 1.3 H9.5 V12.6 L5.7 16.6 L1.9 12.6 Z" fill="#ececec" stroke="#b4b4b4" stroke-width=".8"/><path d="M9.6 1.5 V12.7 L5.7 16.8" fill="none" stroke="#6e6e6e" stroke-width="1"/><path d="M2.7 12 V2.1 H8.8" fill="none" stroke="#fff" stroke-width=".9"/></svg>

<!-- X button -->
<div class="abs" style="left:694.4px;top:66.4px;width:13.4px;height:13.4px;background:radial-gradient(circle at 1.2px 1.2px,#3f5f70 0,#3f5f70 .9px,rgba(63,95,112,0) 1.6px),radial-gradient(circle at 12.2px 1.2px,#3f5f70 0,#3f5f70 .9px,rgba(63,95,112,0) 1.6px),radial-gradient(circle at 1.2px 12.2px,#3f5f70 0,#3f5f70 .9px,rgba(63,95,112,0) 1.6px),radial-gradient(circle at 12.2px 12.2px,#3f5f70 0,#3f5f70 .9px,rgba(63,95,112,0) 1.6px),#f4fbff;box-sizing:border-box;border-radius:1.5px;box-shadow:inset 0 0 0 1px #cde2ee;color:#cc1212;font-weight:bold;font-size:10.6px;line-height:14.4px;text-align:center">X</div>

<!-- right vertical slider -->
<div class="abs" style="left:690px;top:216.6px;width:22px;height:82px;background:#f0f0f0"></div>
<div class="abs" style="left:694px;top:222.6px;width:13.2px;height:69.2px;box-sizing:border-box;background:#fff;border:1px solid #d4d4d4;border-top:1.2px solid #8c8c8c;border-left:1.2px solid #a0a0a0"></div>
<svg class="abs" style="left:690px;top:252px" width="23" height="13" viewBox="0 0 23 13"><path d="M2.2 2.2 H17.2 L21 6 L17.2 10.6 H2.2 Z" fill="#f1f1f1" stroke="#c8c8c8" stroke-width=".6"/><path d="M2.2 10.7 H17.3 L21 6.2" fill="none" stroke="#707070" stroke-width="1.1"/><path d="M2.4 2.4 H17" fill="none" stroke="#fff" stroke-width="1"/></svg>
<svg class="abs" style="left:600px;top:84px" width="114" height="114" viewBox="600 84 114 114">
<circle cx="656.7" cy="140.8" r="47.1" fill="none" stroke="#868686" stroke-width="3.4"/>
<circle cx="656.7" cy="140.8" r="43" fill="none" stroke="#1414e6" stroke-width="5.4"/>
<circle cx="656.7" cy="140.8" r="39.4" fill="none" stroke="#bcbcbc" stroke-width="2.1"/>
<circle cx="656.7" cy="140.8" r="38.4" fill="#000"/>
<line x1="664.58" y1="101.18" x2="665.62" y2="95.98" stroke="#8c94cc" stroke-width="1.5"/>
<line x1="672.16" y1="103.48" x2="674.19" y2="98.58" stroke="#8c94cc" stroke-width="1.5"/>
<line x1="679.15" y1="107.21" x2="682.09" y2="102.80" stroke="#8c94cc" stroke-width="1.5"/>
<line x1="690.29" y1="118.35" x2="694.70" y2="115.41" stroke="#8c94cc" stroke-width="1.5"/>
<line x1="694.02" y1="125.34" x2="698.92" y2="123.31" stroke="#8c94cc" stroke-width="1.5"/>
<line x1="696.32" y1="132.92" x2="701.52" y2="131.88" stroke="#8c94cc" stroke-width="1.5"/>
<line x1="696.32" y1="148.68" x2="701.52" y2="149.72" stroke="#8c94cc" stroke-width="1.5"/>
<line x1="694.02" y1="156.26" x2="698.92" y2="158.29" stroke="#8c94cc" stroke-width="1.5"/>
<line x1="690.29" y1="163.25" x2="694.70" y2="166.19" stroke="#8c94cc" stroke-width="1.5"/>
<line x1="679.15" y1="174.39" x2="682.09" y2="178.80" stroke="#8c94cc" stroke-width="1.5"/>
<line x1="672.16" y1="178.12" x2="674.19" y2="183.02" stroke="#8c94cc" stroke-width="1.5"/>
<line x1="664.58" y1="180.42" x2="665.62" y2="185.62" stroke="#8c94cc" stroke-width="1.5"/>
<line x1="648.82" y1="180.42" x2="647.78" y2="185.62" stroke="#8c94cc" stroke-width="1.5"/>
<line x1="641.24" y1="178.12" x2="639.21" y2="183.02" stroke="#8c94cc" stroke-width="1.5"/>
<line x1="634.25" y1="174.39" x2="631.31" y2="178.80" stroke="#8c94cc" stroke-width="1.5"/>
<line x1="623.11" y1="163.25" x2="618.70" y2="166.19" stroke="#8c94cc" stroke-width="1.5"/>
<line x1="619.38" y1="156.26" x2="614.48" y2="158.29" stroke="#8c94cc" stroke-width="1.5"/>
<line x1="617.08" y1="148.68" x2="611.88" y2="149.72" stroke="#8c94cc" stroke-width="1.5"/>
<line x1="617.08" y1="132.92" x2="611.88" y2="131.88" stroke="#8c94cc" stroke-width="1.5"/>
<line x1="619.38" y1="125.34" x2="614.48" y2="123.31" stroke="#8c94cc" stroke-width="1.5"/>
<line x1="623.11" y1="118.35" x2="618.70" y2="115.41" stroke="#8c94cc" stroke-width="1.5"/>
<line x1="634.25" y1="107.21" x2="631.31" y2="102.80" stroke="#8c94cc" stroke-width="1.5"/>
<line x1="641.24" y1="103.48" x2="639.21" y2="98.58" stroke="#8c94cc" stroke-width="1.5"/>
<line x1="648.82" y1="101.18" x2="647.78" y2="95.98" stroke="#8c94cc" stroke-width="1.5"/>
<line x1="656.70" y1="103.40" x2="656.70" y2="91.40" stroke="#fff" stroke-width="1.8"/>
<line x1="683.15" y1="114.35" x2="691.63" y2="105.87" stroke="#fff" stroke-width="1.8"/>
<line x1="694.10" y1="140.80" x2="706.10" y2="140.80" stroke="#fff" stroke-width="1.8"/>
<line x1="683.15" y1="167.25" x2="691.63" y2="175.73" stroke="#fff" stroke-width="1.8"/>
<line x1="656.70" y1="178.20" x2="656.70" y2="190.20" stroke="#fff" stroke-width="1.8"/>
<line x1="630.25" y1="167.25" x2="621.77" y2="175.73" stroke="#fff" stroke-width="1.8"/>
<line x1="619.30" y1="140.80" x2="607.30" y2="140.80" stroke="#fff" stroke-width="1.8"/>
<line x1="630.25" y1="114.35" x2="621.77" y2="105.87" stroke="#fff" stroke-width="1.8"/>
<text x="655.8" y="111.8" text-anchor="middle" font-family="Liberation Sans, sans-serif" font-weight="bold" font-size="8.6" fill="#fff" stroke="#fff" stroke-width=".25">N</text>
<text x="655.9" y="175.7" text-anchor="middle" font-family="Liberation Sans, sans-serif" font-weight="bold" font-size="8.6" fill="#fff" stroke="#fff" stroke-width=".25">S</text>
<text x="623.2" y="144.2" text-anchor="middle" font-family="Liberation Sans, sans-serif" font-weight="bold" font-size="8.6" fill="#fff" stroke="#fff" stroke-width=".25">W</text>
<text x="687.4" y="144.2" text-anchor="middle" font-family="Liberation Sans, sans-serif" font-weight="bold" font-size="8.6" fill="#fff" stroke="#fff" stroke-width=".25">E</text>
<text x="633.6" y="121.1" text-anchor="middle" font-family="Liberation Sans, sans-serif" font-weight="bold" font-size="8.6" letter-spacing="1.7" fill="#fff" stroke="#fff" stroke-width=".25">NW</text>
<text x="678.6" y="121.1" text-anchor="middle" font-family="Liberation Sans, sans-serif" font-weight="bold" font-size="8.6" letter-spacing="0.9" fill="#fff" stroke="#fff" stroke-width=".25">NE</text>
<text x="634.2" y="166.8" text-anchor="middle" font-family="Liberation Sans, sans-serif" font-weight="bold" font-size="8.6" letter-spacing="1.7" fill="#fff" stroke="#fff" stroke-width=".25">SW</text>
<text x="678.6" y="166.8" text-anchor="middle" font-family="Liberation Sans, sans-serif" font-weight="bold" font-size="8.6" letter-spacing="0.9" fill="#fff" stroke="#fff" stroke-width=".25">SE</text>
<rect x="653" y="122.9" width="6.8" height="0.9" fill="#a0a0a0"/>
<rect x="656.1" y="123.4" width="0.9" height="2.6" fill="#909090"/>
<rect x="630" y="132" width="52" height="1.7" fill="#9c3468"/>
<rect x="630" y="133.5" width="52" height="3.6" fill="#1a5fd0"/>
<rect x="654" y="134.6" width="28" height="1" fill="#3f86ea"/>
<rect x="630" y="133.5" width="24" height="3.6" fill="#4a86e4"/>
<rect x="630" y="137" width="52" height="1.4" fill="#0e3c8c"/>
<rect x="629.8" y="132.4" width="1.3" height="5.8" fill="#b0a070"/>
<rect x="634" y="133.6" width="0.9" height="3.3" fill="#7eaaf2"/>
<rect x="638" y="133.6" width="0.9" height="3.3" fill="#7eaaf2"/>
<rect x="642" y="133.6" width="0.9" height="3.3" fill="#7eaaf2"/>
<rect x="646" y="133.6" width="0.9" height="3.3" fill="#7eaaf2"/>
<rect x="650" y="133.6" width="0.9" height="3.3" fill="#7eaaf2"/>
<rect x="662" y="133.6" width="0.9" height="3.3" fill="#7eaaf2"/>
<rect x="666" y="133.6" width="0.9" height="3.3" fill="#7eaaf2"/>
<rect x="651" y="138.6" width="12" height="0.9" fill="#2050a0"/>
<rect x="644.3" y="150.4" width="24.6" height="4" rx="1" fill="#1a55c0"/>
<rect x="646.5" y="154.2" width="20" height="0.9" fill="#3a70d0"/>
<path d="M646 152.6 V150 Q646 148.8 647.4 148.6 L655 147.6 H658.4 L666 148.6 Q667.2 148.8 667.2 150 V152.6 Z" fill="#f01818"/>
<path d="M654.9 126.6 Q656.6 124.8 658.3 126.6 L658.8 131 L658.6 140 L657.8 150 L657.1 157.8 H656.1 L655.4 150 L654.6 140 L654.4 131 Z" fill="#f01818"/>
<ellipse cx="656.7" cy="134.8" rx="1" ry="2.2" fill="#a8d8f4"/>
</svg>
<!-- playback buttons -->
<div class="pbtn" style="left:14.5px"></div>
<div class="pbtn" style="left:46.6px"></div>
<div class="pbtn" style="left:78.7px"></div>
<svg class="abs" style="left:15px;top:362px" width="92" height="26" viewBox="15 362 92 26">
 <circle cx="28.9" cy="375" r="4.1" fill="#9c9c9c"/>
 <path d="M56.2 370.8 L65.2 374.6 L56.2 379.2 Z" fill="#2c5a88"/>
 <rect x="88.4" y="370.8" width="6.6" height="8.2" fill="#2c5a88"/>
</svg>
<div class="abs" style="left:15px;top:394px;width:91px;height:13.8px;background:#f0f0f0"></div>
<div class="abs" style="left:22px;top:397.4px;width:78.5px;height:1.5px;background:#a0a0a0"></div>
<div class="abs" style="left:21.2px;top:396.2px;width:1.3px;height:7.2px;background:#9a9a9a"></div>
<div class="abs" style="left:15.3px;top:411.5px;font-size:17.2px;line-height:20px;color:#f2f2f2;white-space:nowrap;letter-spacing:0.25px;-webkit-text-stroke:.25px #f2f2f2">00: 00: 00</div>
<div class="abs" style="left:15px;top:437.5px;font-size:10.7px;line-height:13px;color:#ededed;white-space:nowrap;transform-origin:0 0;transform:scaleX(.92)">Latitude</div>
<div class="abs" style="left:15px;top:453.5px;font-size:10.7px;line-height:13px;color:#ededed;white-space:nowrap;transform-origin:0 0;transform:scaleX(.92)">Longitude</div>
<div class="lab" style="left:130.8px;width:60px;top:349.8px;line-height:12px">Volt</div><div class="box" style="top:350px"></div><div class="unit" style="left:229.6px;top:349.8px;line-height:12px">V</div>
<div class="lab" style="left:130.8px;width:60px;top:369.1px;line-height:12px">Trip</div><div class="box" style="top:369.3px"><span style="position:relative;top:1px;display:inline-block;line-height:11px;clip-path:inset(3.4px 0 0 0)">0.000</span></div><div class="unit" style="left:229.6px;top:369.1px;line-height:12px">km</div>
<div class="lab" style="left:130.8px;width:60px;top:388.3px;line-height:12px">Speed</div><div class="box" style="top:388.5px"><span style="display:inline-block;line-height:13px;font-size:10px">0</span></div><div class="unit" style="left:229.6px;top:388.3px;line-height:12px">km/h</div>
<div class="lab" style="left:130.8px;width:60px;top:407.6px;line-height:12px">RPM 1</div><div class="box" style="top:407.8px"></div><div class="unit" style="left:229.6px;top:407.6px;line-height:12px">rpm</div>
<div class="lab" style="left:130.8px;width:60px;top:426.8px;line-height:12px">RPM 2</div><div class="box" style="top:427px"></div><div class="unit" style="left:229.6px;top:426.8px;line-height:12px">rpm</div>
<div class="lab" style="left:131.5px;width:60px;top:452.6px;line-height:12px">Fuel</div><div class="abs" style="left:178px;top:446px;width:45px;height:20px;box-sizing:border-box;background:#fff;border:1px solid #b0b0b0;border-top-color:#767676;border-left-color:#8a8a8a;overflow:hidden"><div class="abs" style="left:1.90px;top:.6px;width:4.8px;height:16.8px;background:linear-gradient(180deg,#bcbcfb 0,#b0b0fa 18%,#8a8af2 26%,#8686f0 100%)"></div><div class="abs" style="left:8.35px;top:.6px;width:4.8px;height:16.8px;background:linear-gradient(180deg,#bcbcfb 0,#b0b0fa 18%,#8a8af2 26%,#8686f0 100%)"></div><div class="abs" style="left:14.80px;top:.6px;width:4.8px;height:16.8px;background:linear-gradient(180deg,#bcbcfb 0,#b0b0fa 18%,#8a8af2 26%,#8686f0 100%)"></div><div class="abs" style="left:21.25px;top:.6px;width:4.8px;height:16.8px;background:linear-gradient(180deg,#bcbcfb 0,#b0b0fa 18%,#8a8af2 26%,#8686f0 100%)"></div><div class="abs" style="left:27.70px;top:.6px;width:4.8px;height:16.8px;background:linear-gradient(180deg,#bcbcfb 0,#b0b0fa 18%,#8a8af2 26%,#8686f0 100%)"></div><div class="abs" style="left:34.15px;top:.6px;width:4.8px;height:16.8px;background:linear-gradient(180deg,#bcbcfb 0,#b0b0fa 18%,#8a8af2 26%,#8686f0 100%)"></div><div class="abs" style="left:-.6px;top:4px;width:43px;text-align:center;font-weight:bold;font-size:8.8px;line-height:10px;color:#06061c;white-space:nowrap;-webkit-text-stroke:.2px #06061c">100 %</div></div>

<!-- chart -->
<div class="abs" style="left:399.6px;top:384.6px;font-size:12.6px;line-height:14px;color:#f4f4f4;white-space:nowrap">Altitude (0)</div>
<div class="ylab" style="top:398.6px">100</div>
<div class="ylab" style="top:410.4px">75</div>
<div class="ylab" style="top:421.8px">50</div>
<div class="ylab" style="top:433px">25</div>
<div class="ylab" style="top:444.2px">0</div>
<svg class="abs" style="left:290px;top:400px" width="296" height="56" viewBox="290 400 296 56">
 <rect x="293" y="404" width="288" height="47.7" fill="#fff"/>
 <rect x="293" y="404" width="1.5" height="47.7" fill="#808080"/>
 <g stroke="#aeaee8" stroke-width="0.75" stroke-dasharray="3 2" fill="none">
  <line x1="294.5" y1="404.5" x2="581" y2="404.5"/>
  <line x1="294.5" y1="416.4" x2="581" y2="416.4"/>
  <line x1="294.5" y1="428.3" x2="581" y2="428.3"/>
  <line x1="294.9" y1="404" x2="294.9" y2="451.7" opacity=".6"/>
  <line x1="363.5" y1="404" x2="363.5" y2="451.7"/>
  <line x1="432" y1="404" x2="432" y2="451.7"/>
  <line x1="500.7" y1="404" x2="500.7" y2="451.7"/>
  <line x1="569.4" y1="404" x2="569.4" y2="451.7"/>
 </g>
</svg>
<div class="xlab" style="left:277.5px">00:00:00</div>
<div class="xlab" style="left:346px">00:00:06</div>
<div class="xlab" style="left:414px">00:00:12</div>
<div class="xlab" style="left:482.5px">00:00:18</div>
<div class="xlab" style="left:550.6px">00:00:24</div>

<!-- temperature -->
<div class="abs" style="left:597.5px;top:397px;width:99px;height:11px;box-sizing:border-box;border:1px solid #1c1c50;background:linear-gradient(180deg,#ffffff 0,#f2f2f2 40%,#cfcfcf 100%);text-align:center;font-size:8.8px;line-height:9px;color:#141428">Temperature</div>
<div class="tlab" style="top:416.2px;line-height:12px">Temp 1</div><div class="tbtn" style="top:416.4px">0 °C</div>
<div class="tlab" style="top:429.2px;line-height:12px">Temp 2</div><div class="tbtn" style="top:429.4px">0 °C</div>
<div class="tlab" style="top:442.1px;line-height:12px">Temp 3</div><div class="tbtn" style="top:442.3px">0 °C</div>
<div class="tlab" style="top:455.1px;line-height:12px">Temp 4</div><div class="tbtn" style="top:455.3px">0 °C</div>
</div>

<!-- status bar -->
<div class="abs" style="left:6.3px;top:471.8px;width:707.7px;height:19.9px;background:#f0f0f0"></div>
<div class="abs" style="left:9px;top:472.6px;width:74.5px;height:18.6px;box-sizing:border-box;background:#f3f3f3;border:1px solid #d4d4d4;border-left-color:#9a9a9a;border-top-color:#e6e6e6;text-align:center;font-size:9.4px;line-height:16.4px;color:#08080e;-webkit-text-stroke:.35px #08080e">2D View</div>
<svg class="abs" style="left:700px;top:478px" width="13" height="13" viewBox="0 0 13 13"><g stroke="#b8b8b8" stroke-width="1"><line x1="2" y1="12.5" x2="12.5" y2="2"/><line x1="5.5" y1="12.5" x2="12.5" y2="5.5"/><line x1="9" y1="12.5" x2="12.5" y2="9"/></g></svg>
</body></html>
